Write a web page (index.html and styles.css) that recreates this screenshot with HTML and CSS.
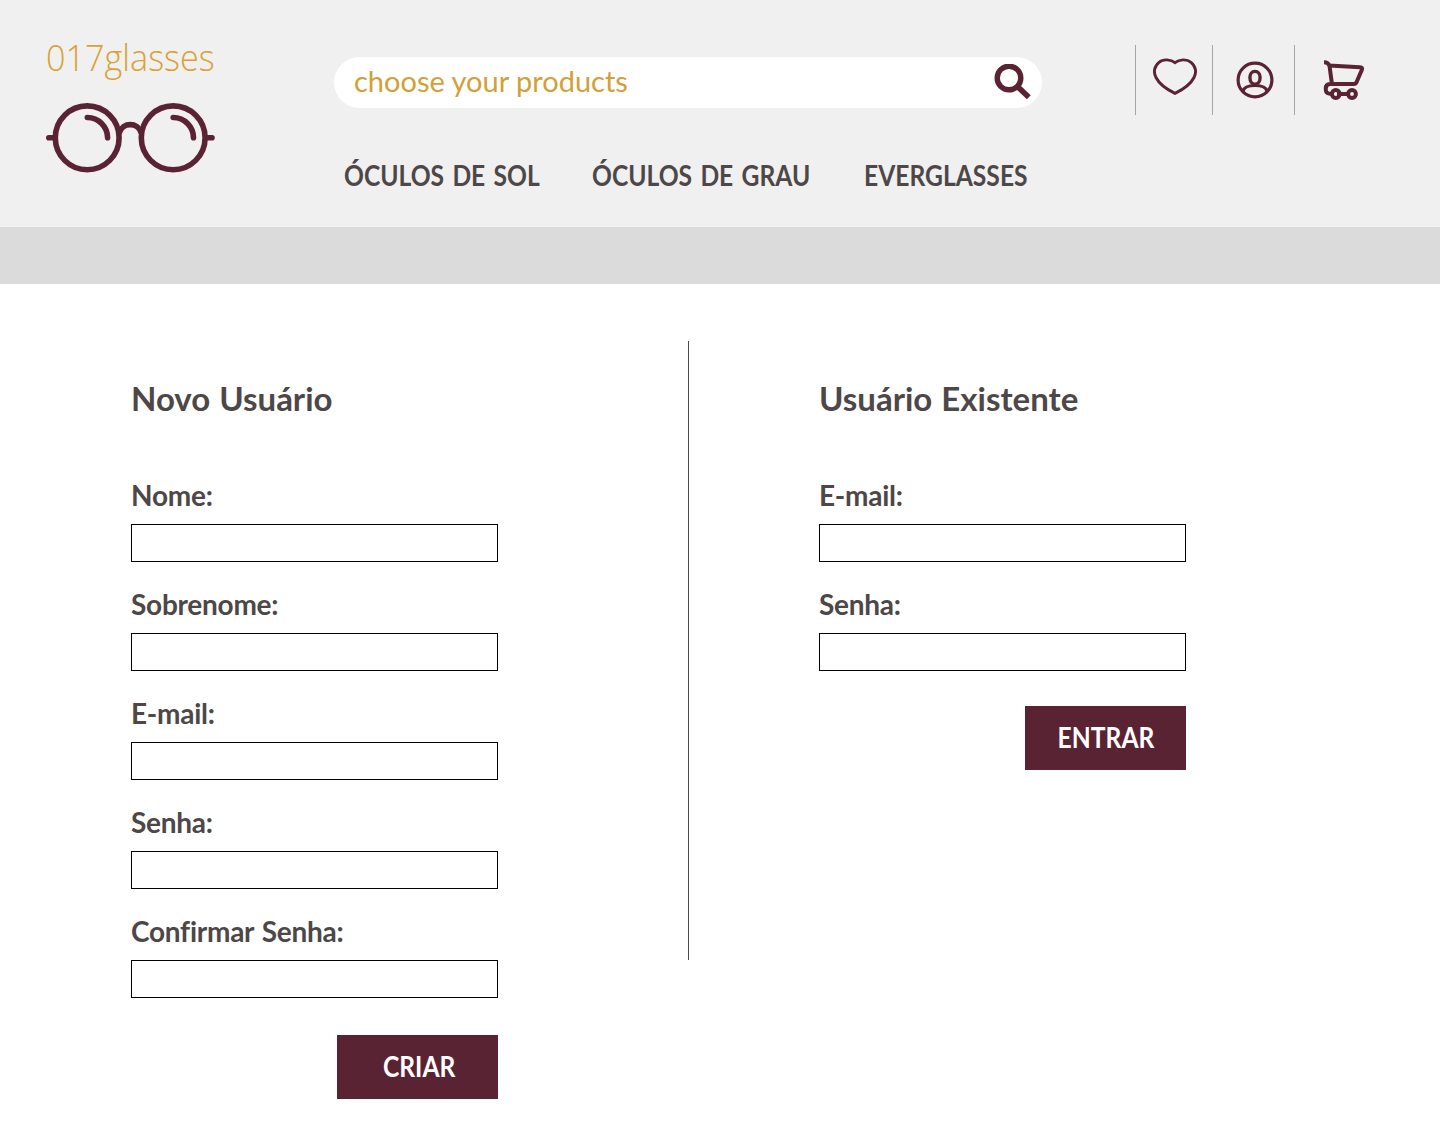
FILE: index.html
```html
<!DOCTYPE html>
<html lang="pt-BR">
<head>
<meta charset="utf-8">
<title>017glasses</title>
<link rel="stylesheet" href="styles.css">
</head>
<body>
<header class="header">
  <a class="brand">
    <span class="brand-name">017glasses</span>
    <svg class="brand-glasses" width="170" height="70" viewBox="0 0 170 70" fill="none" stroke="#5a2333" stroke-width="5.600" stroke-linecap="round">
      <circle cx="41.200" cy="34.800" r="31.900"/>
      <circle cx="127.200" cy="34.800" r="31.900"/>
      <path d="M2.800 34.800h5M161 34.800h5M73.500 29.500c3-10.500 18.500-10.500 21.500 0"/>
      <path d="M41.300 14.500a20.300 20.300 0 0 1 20.300 20.300M127.200 14.500a20.300 20.300 0 0 1 20.300 20.300"/>
    </svg>
  </a>
  <div class="center">
    <div class="search">
      <span class="search-text">choose your products</span>
      <svg width="38" height="38" viewBox="0 0 38 38" fill="none" stroke="#5a2333">
        <circle cx="15" cy="14" r="11.800" stroke-width="5.400"/>
        <path d="M23.500 22.500L34.800 33.200" stroke-width="5.600"/>
      </svg>
    </div>
    <nav class="nav">
      <a class="condensed">ÓCULOS DE SOL</a>
      <a class="condensed">ÓCULOS DE GRAU</a>
      <a class="condensed">EVERGLASSES</a>
    </nav>
  </div>
  <div class="actions">
    <a class="action heart">
      <svg width="44" height="38" viewBox="0 0 44 38" fill="none" stroke="#5a2333" stroke-width="2.900">
        <path d="M22 4.700C18 1.300 10 .8 6 4.300 1 8.300.300 14.500 3 19.500c3.500 7 11 12 19 15.900C30 31.500 37.500 26.500 41 19.500c2.700-5 2-11.200-3-15.200C34 .8 26 1.300 22 4.700z"/>
      </svg>
    </a>
    <a class="action user">
      <svg width="38" height="38" viewBox="0 0 38 38" fill="none" stroke="#5a2333" stroke-width="3.200">
        <circle cx="19" cy="19" r="16.900"/>
        <path d="M19 10.400c-3 0-5.100 2.300-5.100 5.900 0 4 2 6.900 5.100 6.900s5.100-2.900 5.100-6.900c0-3.600-2.100-5.900-5.100-5.900z" stroke-width="3.400"/>
        <path d="M7 30c1-4 5.500-5.500 12-5.500S30 26 31 30"/>
      </svg>
    </a>
    <a class="action cart">
      <svg width="42" height="42" viewBox="0 0 42 42" fill="none" stroke="#5a2333" stroke-width="4" stroke-linejoin="round">
        <path d="M1 3.200c3 0 4.500.8 5.500 3.500L8.800 24M6 6.500l31 1.700c2 .1 2.500 1 1.900 2.600L33.500 23.300c-.5 1.200-1.200 1.700-2.500 1.700H7c-3.500 0-4.200 2-4.200 4.500v1.500C2.800 34 5 35 9 35M14 35h13"/>
        <circle cx="12.800" cy="35" r="3.900"/>
        <circle cx="29" cy="35" r="3.900"/>
      </svg>
    </a>
  </div>
</header>
<div class="band"></div>
<main class="main">
  <form class="panel new-user">
    <h2>Novo Usuário</h2>
    <label class="field">Nome:<input type="text"></label>
    <label class="field">Sobrenome:<input type="text"></label>
    <label class="field">E-mail:<input type="text"></label>
    <label class="field">Senha:<input type="password"></label>
    <label class="field">Confirmar Senha:<input type="password"></label>
    <button type="button"><span class="condensed">CRIAR</span></button>
  </form>
  <div class="divider"></div>
  <form class="panel existing-user">
    <h2>Usuário Existente</h2>
    <label class="field">E-mail:<input type="text"></label>
    <label class="field">Senha:<input type="password"></label>
    <button type="button"><span class="condensed">ENTRAR</span></button>
  </form>
</main>
</body>
</html>
```
FILE: styles.css
```css
* { box-sizing: border-box; }
body {
  margin: 0;
  background: #fff;
  color: #4d4747;
  font-family: Lato, "Open Sans", sans-serif;
  font-weight: 700;
  font-size: 28px;
  font-variant-ligatures: none;
}
.header {
  display: flex;
  height: 227px;
  background: #f0f0f0;
}
.brand {
  display: flex;
  flex-direction: column;
  width: 334px;
  padding: 33px 0 0 46px;
}
.brand-name {
  height: 70px;
  color: #d9a233;
  font: 300 36px/50px "Open Sans", sans-serif;
  white-space: nowrap;
  transform: scaleX(.95);
  transform-origin: left;
}
.center { width: 708px; padding-top: 57px; }
.search {
  display: flex;
  align-items: center;
  justify-content: space-between;
  height: 51px;
  padding: 0 10px 0 20px;
  border-radius: 26px;
  background: #fff;
  color: #d3a038;
  font-weight: 400;
  font-size: 29px;
}
.search-text { height: 51px; line-height: 48px; }
.nav {
  display: grid;
  grid-template-columns: 248px 272px 1fr;
  padding: 50px 0 0 10px;
  line-height: 34px;
  white-space: nowrap;
  word-spacing: 2.6px;
}
.condensed { display: inline-block; transform: scaleX(.88); }
.nav .condensed { transform-origin: left; }
.actions {
  display: flex;
  height: 70px;
  margin: 45px 0 0 93px;
}
.action { border-left: 1px solid #a5a5a5; }
.action svg { display: block; }
.heart { width: 77px; padding: 13px 0 0 17px; }
.user { width: 82px; padding: 16px 0 0 23px; }
.cart { width: 80px; padding: 14px 0 0 28px; }
.band { height: 57px; background: #dbdbdb; }
.main {
  display: grid;
  grid-template-columns: 557px 1px 367px;
  padding: 57px 0 0 131px;
}
.panel { display: flex; flex-direction: column; width: 367px; padding-top: 35px; }
.existing-user { margin-left: 130px; }
.divider { height: 619px; background: #4d4747; }
h2 { margin: 0 0 58px; font-size: 33px; line-height: 44px; word-spacing: 1px; }
.field {
  display: flex;
  flex-direction: column;
  height: 109px;
  line-height: 34px;
  letter-spacing: -.25px;
  word-spacing: 1.5px;
  white-space: nowrap;
}
.field input {
  width: 367px;
  height: 38px;
  margin: 12px 0 0;
  border: 1px solid #000;
  background: #fff;
}
button {
  align-self: flex-end;
  width: 161px;
  height: 64px;
  margin-top: 10px;
  padding: 0 0 2px;
  border: 0;
  background: #5a2333;
  color: #fff;
  font: inherit;
}
.new-user button { margin-top: 12px; padding-left: 3px; }
```
